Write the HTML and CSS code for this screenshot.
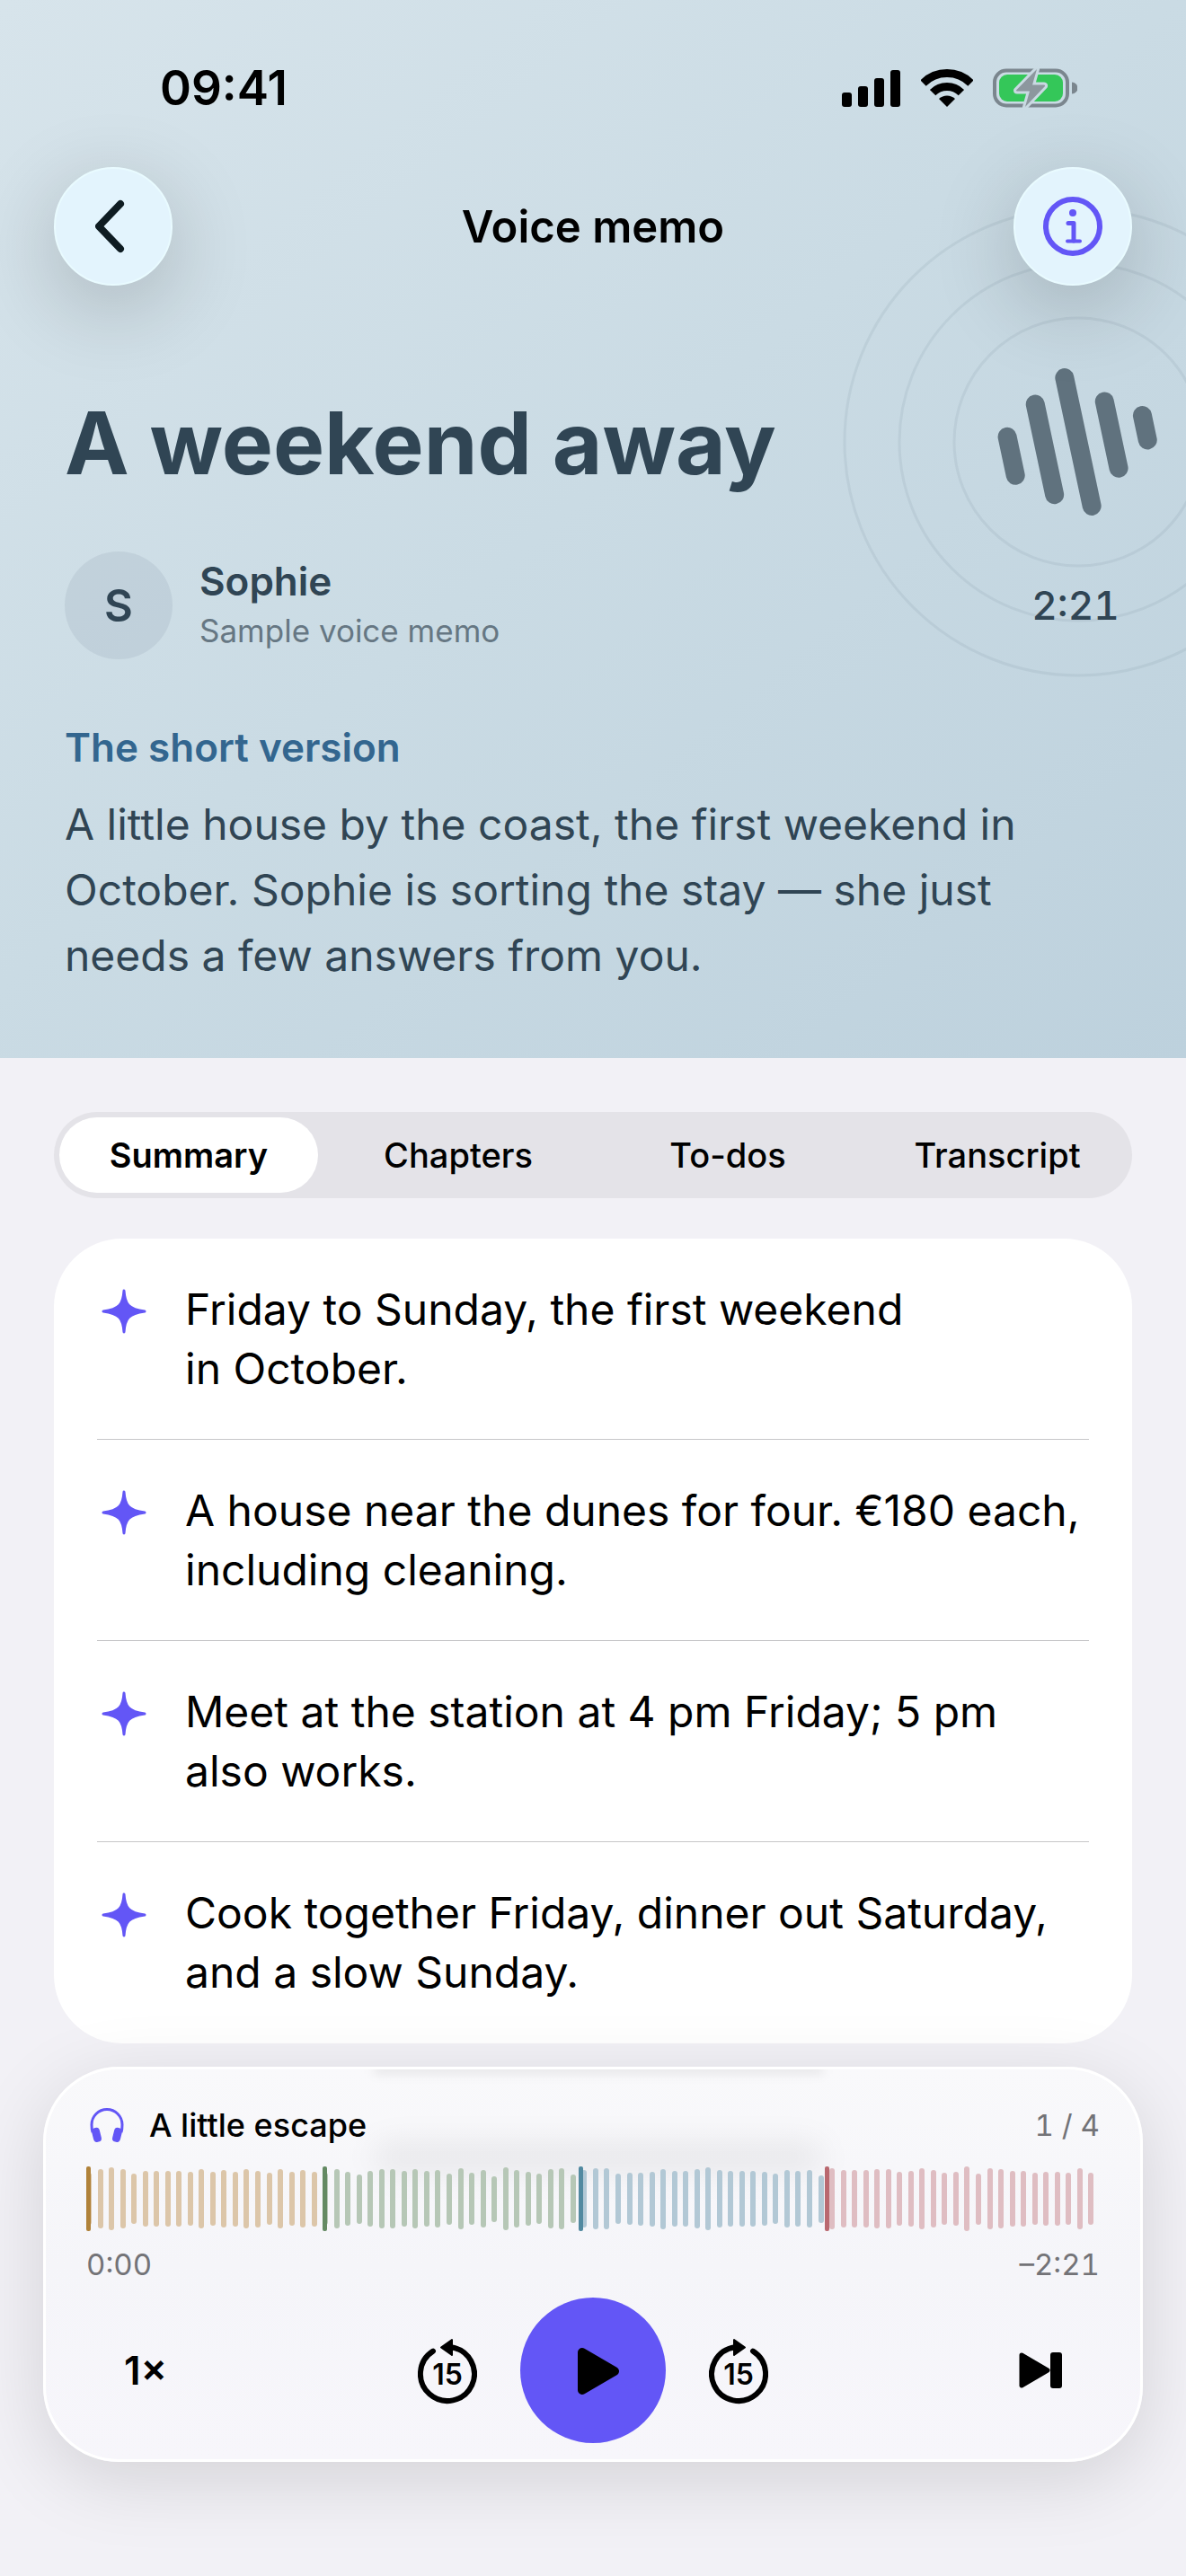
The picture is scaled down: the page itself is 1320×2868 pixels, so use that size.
FILE: index.html
```
<!DOCTYPE html>
<html lang="en">
<head>
    <meta charset="UTF-8">
    <meta name="viewport" content="width=device-width, initial-scale=1.0">
    <title>Voice memo</title>
    <link rel="stylesheet" href="styles.css">
</head>
<body>
    <!-- shared icon, used once per summary point -->
    <svg class="sprite" aria-hidden="true">
        <symbol id="spark" viewBox="0 0 50 50">
            <path d="M25 2C26 17 30 22.500 48 25C30 27.500 26 33 25 48C24 33 20 27.500 2 25C20 22.500 24 17 25 2Z" fill="currentColor" stroke="currentColor" stroke-width="3" stroke-linejoin="round"/>
        </symbol>
    </svg>

    <header class="hero">
        <div class="cover">
            <svg viewBox="0 0 524 524" aria-hidden="true">
                <g class="rings">
                    <circle cx="262" cy="262" r="138"/>
                    <circle cx="262" cy="262" r="199"/>
                    <circle cx="262" cy="262" r="260"/>
                </g>
                <g class="wave" transform="rotate(-12 262 262)">
                    <path d="M186 240v44M224 211v103M262 189v146M300 224v76M338 248v28"/>
                </g>
            </svg>
            <span class="duration">2:21</span>
        </div>

        <div class="status">
            <span class="clock">09:41</span>
            <div class="status-icons">
                <svg width="66" height="44" viewBox="0 0 66 44" aria-hidden="true">
                    <rect x="0" y="27" width="11" height="16" rx="3"/>
                    <rect x="18" y="20" width="11" height="23" rx="3"/>
                    <rect x="36" y="11" width="11" height="32" rx="3"/>
                    <rect x="54" y="2" width="11" height="41" rx="3"/>
                </svg>
                <svg width="58" height="44" viewBox="0 0 58 44" aria-hidden="true">
                    <path d="M2.500 16.500A37.500 37.500 0 0 1 55.500 16.500M13.100 27.100A22.500 22.500 0 0 1 44.900 27.100" fill="none" stroke="#000" stroke-width="9"/>
                    <path d="M29 43L20 34A13 13 0 0 1 38 34Z"/>
                </svg>
                <svg width="94" height="44" viewBox="0 0 94 44" aria-hidden="true">
                    <rect x="2" y="2.500" width="81" height="39" rx="13" fill="none" stroke="#7b868e" stroke-width="4"/>
                    <rect x="7" y="7" width="71" height="30" rx="9" fill="#34c759"/>
                    <path d="M88 15.500a6.500 6.500 0 0 1 0 13z" fill="#7b868e"/>
                    <path class="bolt" d="M49 1L26 24.500Q26 25.500 27 25.500H41L36 43L58 20Q58.500 18.500 57 18.500H44Z"/>
                </svg>
            </div>
        </div>

        <nav class="nav">
            <button class="round" aria-label="Back">
                <svg width="40" height="64" viewBox="0 0 40 64"><path d="M28 7L4 32L28 57" fill="none" stroke="#0e1c22" stroke-width="8" stroke-linecap="round" stroke-linejoin="round"/></svg>
            </button>
            <span class="nav-title">Voice memo</span>
            <button class="round" aria-label="Info">
                <svg width="66" height="66" viewBox="0 0 66 66" fill="none" stroke="#6356f6" stroke-linecap="round" stroke-linejoin="round">
                    <circle cx="33" cy="33" r="30" stroke-width="6"/>
                    <path d="M28 29.500H34V49" stroke-width="5"/>
                    <path d="M27 49.500H41" stroke-width="4"/>
                    <circle cx="33" cy="18" r="4" fill="#6356f6" stroke="none"/>
                </svg>
            </button>
        </nav>

        <div class="hero-body">
            <h1>A weekend away</h1>
            <div class="author">
                <span class="avatar">S</span>
                <div>
                    <div class="name">Sophie</div>
                    <div class="kind">Sample voice memo</div>
                </div>
            </div>
            <h2>The short version</h2>
            <p>A little house by the coast, the first weekend in October. Sophie is sorting the stay — she just needs a few answers from you.</p>
        </div>
    </header>

    <main>
        <div class="tabs" role="tablist">
            <button class="tab active" role="tab" aria-selected="true">Summary</button>
            <button class="tab" role="tab" aria-selected="false">Chapters</button>
            <button class="tab" role="tab" aria-selected="false">To-dos</button>
            <button class="tab" role="tab" aria-selected="false">Transcript</button>
        </div>

        <ul class="card">
            <li><svg class="spark"><use href="#spark"/></svg><span>Friday to Sunday, the first weekend in&nbsp;October.</span></li>
            <li><svg class="spark"><use href="#spark"/></svg><span>A house near the dunes for four. €180 each, including cleaning.</span></li>
            <li><svg class="spark"><use href="#spark"/></svg><span>Meet at the station at 4 pm Friday; 5 pm also&nbsp;works.</span></li>
            <li><svg class="spark"><use href="#spark"/></svg><span>Cook together Friday, dinner out Saturday, and a slow Sunday.</span></li>
        </ul>
    </main>

    <section class="player" aria-label="Player">
        <div class="now">
            <svg width="38" height="40" viewBox="0 0 38 40" aria-hidden="true">
                <path d="M3 28C2 25 2 22 2 19.500A17 17 0 0 1 36 19.500C36 22 36 25 35 28" fill="none" stroke="#6356f6" stroke-width="3"/>
                <rect x="3" y="23" width="9" height="16" rx="4" transform="rotate(-14 7 31)" fill="#6356f6"/>
                <rect x="26" y="23" width="9" height="16" rx="4" transform="rotate(14 31 31)" fill="#6356f6"/>
            </svg>
            <span class="chapter-name">A little escape</span>
            <span class="count">1 / 4</span>
        </div>

        <div class="waveform" id="waveform"></div>

        <div class="times">
            <span>0:00</span>
            <span>–2:21</span>
        </div>

        <div class="controls">
            <button class="side">1×</button>
            <div class="transport">
                <button aria-label="Back 15 seconds">
                    <svg width="66" height="80" viewBox="0 0 66 80">
                        <path d="M37 14.300A30 30 0 1 1 17 18.600" fill="none" stroke="#000" stroke-width="6" stroke-linecap="round"/>
                        <path d="M26 14.500L38 6V23Z" stroke="#000" stroke-width="2" stroke-linejoin="round"/>
                        <text x="33" y="56" text-anchor="middle">15</text>
                    </svg>
                </button>
                <button class="play" aria-label="Play">
                    <svg width="60" height="60" viewBox="0 0 60 60"><path d="M18 10L54 31L18 52Z" stroke="#000" stroke-width="10" stroke-linejoin="round"/></svg>
                </button>
                <button aria-label="Forward 15 seconds">
                    <svg width="66" height="80" viewBox="0 0 66 80">
                        <path d="M29 14.300A30 30 0 1 0 49 18.600" fill="none" stroke="#000" stroke-width="6" stroke-linecap="round"/>
                        <path d="M40 14.500L28 6V23Z" stroke="#000" stroke-width="2" stroke-linejoin="round"/>
                        <text x="33" y="56" text-anchor="middle">15</text>
                    </svg>
                </button>
            </div>
            <button class="side" aria-label="Next chapter">
                <svg width="50" height="44" viewBox="0 0 50 44">
                    <path d="M4 5L33 22L4 39Z" stroke="#000" stroke-width="5" stroke-linejoin="round"/>
                    <rect x="36" y="2" width="13" height="40" rx="3"/>
                </svg>
            </button>
        </div>
    </section>

    <script>
        // bar heights per chapter, start is the marker position in percent
        const chapters = [
            { name: 'one', start: 0, bars: [58, 66, 70, 66, 56, 62, 62, 62, 62, 60, 66, 60, 64, 61, 66, 63, 58, 66, 60, 64, 61] },
            { name: 'two', start: 23.3, bars: [58, 66, 60, 55, 62, 66, 66, 62, 66, 62, 64, 57, 68, 58, 64, 51, 70, 64, 60, 56, 66, 68, 54] },
            { name: 'three', start: 48.6, bars: [64, 68, 68, 56, 58, 59, 61, 67, 62, 62, 66, 70, 64, 62, 62, 62, 60, 56, 64, 62, 64, 53] },
            { name: 'four', start: 72.9, bars: [68, 64, 64, 64, 66, 66, 60, 62, 68, 64, 58, 60, 72, 57, 68, 66, 62, 62, 58, 60, 60, 58, 68, 58] }
        ];
        const waveform = document.getElementById('waveform');

        chapters.forEach(chapter => {
            chapter.bars.forEach(height => {
                const slot = document.createElement('span');
                slot.className = 'slot ' + chapter.name;
                slot.innerHTML = `<i style="height: ${height}px"></i>`;
                waveform.appendChild(slot);
            });

            const marker = document.createElement('b');
            marker.className = 'marker ' + chapter.name;
            marker.style.left = chapter.start + '%';
            waveform.appendChild(marker);
        });
    </script>
</body>
</html>
```
FILE: styles.css
```
* {
    box-sizing: border-box;
}

body {
    margin: 0;
    background-color: #f2f1f6;
    color: #000;
    font-family: Inter, "Liberation Sans", sans-serif;
}

button {
    padding: 0;
    border: none;
    background: none;
    color: inherit;
    font-family: inherit;
    cursor: pointer;
}

svg {
    display: block;
}

.sprite {
    position: absolute;
    width: 0;
    height: 0;
}

/* Hero */
.hero {
    position: relative;
    overflow: hidden;
    padding-bottom: 78px;
    background: linear-gradient(140deg, #d7e4eb 0%, #cadbe4 48%, #bdd1dd 100%);
    color: #304554;
}

.cover {
    position: absolute;
    top: 230px;
    right: -142px;
    width: 524px;
}

.rings {
    fill: none;
    stroke: rgba(48, 69, 84, 0.07);
    stroke-width: 3;
}

.wave {
    fill: none;
    stroke: #60727e;
    stroke-width: 21;
    stroke-linecap: round;
}

.duration {
    position: absolute;
    top: 416px;
    left: 0;
    right: 6px;
    text-align: center;
    font-size: 44px;
    line-height: 56px;
    font-weight: 500;
    font-variant-numeric: tabular-nums;
}

.status {
    display: flex;
    justify-content: space-between;
    align-items: center;
    height: 96px;
    margin: 50px 121px 40px 178px;
    color: #000;
}

.clock {
    font-size: 53px;
    font-weight: 600;
}

.status-icons {
    display: flex;
    gap: 22px;
}

.bolt {
    fill: #8c979e;
    stroke: #c9d9e2;
    stroke-width: 6;
    stroke-linejoin: round;
    paint-order: stroke;
}

.nav {
    position: relative;
    display: flex;
    justify-content: space-between;
    align-items: center;
    padding: 0 60px;
}

.nav-title {
    color: #000;
    font-size: 49px;
    font-weight: 600;
}

.round {
    display: grid;
    place-items: center;
    width: 132px;
    height: 132px;
    border: 2px solid #e9fbff;
    border-radius: 50%;
    background-color: #e3f4fd;
    box-shadow: 0 24px 96px rgba(0, 0, 0, 0.2);
}

.hero-body {
    position: relative;
    padding: 115px 72px 0;
}

h1 {
    margin: 0 0 61px;
    font-size: 96px;
    line-height: 120px;
    font-weight: 700;
}

.author {
    display: flex;
    align-items: center;
    gap: 30px;
    margin-bottom: 71px;
}

.avatar {
    display: grid;
    place-items: center;
    width: 120px;
    height: 120px;
    border-radius: 50%;
    background-color: rgba(48, 69, 84, 0.08);
    font-size: 49px;
    font-weight: 600;
}

.name {
    font-size: 44px;
    line-height: 56px;
    font-weight: 600;
}

.kind {
    color: #667783;
    font-size: 35px;
    line-height: 54px;
}

h2 {
    margin: 0 0 22px;
    color: #33668f;
    font-size: 44px;
    line-height: 54px;
    font-weight: 600;
}

p {
    max-width: 1120px;
    margin: 0;
    font-size: 48px;
    line-height: 73px;
}

/* Summary */
main {
    padding: 60px 60px 0;
}

.tabs {
    display: grid;
    grid-template-columns: repeat(4, 1fr);
    height: 96px;
    border-radius: 48px;
    background-color: #e4e3e8;
}

.tab {
    margin: 6px;
    border-radius: 42px;
    font-size: 38px;
    font-weight: 500;
}

.tab.active {
    background-color: #fff;
    font-weight: 600;
}

.card {
    margin: 45px 0 0;
    padding: 0 48px;
    border-radius: 76px;
    background-color: #fff;
    list-style: none;
}

.card li {
    display: flex;
    gap: 38px;
    padding: 46px 0 45px;
    border-bottom: 1px solid #c6c6c8;
    font-size: 48px;
    line-height: 66px;
}

.card li:last-child {
    border-bottom-color: transparent;
}

.spark {
    flex: none;
    width: 60px;
    height: 50px;
    margin-top: 10px;
    color: #6356f6;
}

/* Player */
.player {
    position: relative;
    display: flex;
    flex-direction: column;
    gap: 20px;
    margin: 26px 48px 126px;
    padding: 36px 45px 18px;
    border: 3px solid #fff;
    border-radius: 84px;
    background: linear-gradient(#f9f9fb, #f5f5f9 50%, #f7f6fb);
    box-shadow: 0 20px 84px rgba(0, 0, 0, 0.13);
    overflow: hidden;
}

/* text scrolled under the glass */
.player::before,
.player::after {
    content: "";
    position: absolute;
    left: 30%;
    right: 29%;
    background-color: rgba(0, 0, 0, 0.08);
}

.player::before {
    top: -6px;
    height: 11px;
    filter: blur(6px);
}

.player::after {
    top: 80px;
    height: 36px;
    border-radius: 18px;
    background-color: rgba(0, 0, 0, 0.06);
    filter: blur(16px);
}

.now {
    display: flex;
    align-items: center;
    height: 52px;
    padding-left: 4px;
}

.chapter-name {
    margin-left: 28px;
    font-size: 36px;
    font-weight: 500;
}

.count,
.times {
    color: #737377;
    font-size: 33px;
    font-variant-numeric: tabular-nums;
}

.count {
    margin-left: auto;
}

.waveform {
    position: relative;
    z-index: 1;
    display: flex;
    height: 72px;
}

.slot {
    flex: 1;
    display: flex;
    align-items: center;
}

.slot i {
    width: 6px;
    border-radius: 3px;
    background-color: var(--bar);
}

.marker {
    position: absolute;
    top: 0;
    width: 5px;
    height: 100%;
    border-radius: 2px;
    background-color: var(--mark);
}

.one {
    --bar: #dcc6a9;
    --mark: #b0823a;
}

.two {
    --bar: #b6c7b6;
    --mark: #648a63;
}

.three {
    --bar: #b2c8d5;
    --mark: #5189a0;
}

.four {
    --bar: #dfbdc2;
    --mark: #b9686f;
}

.times {
    display: flex;
    justify-content: space-between;
    line-height: 34px;
}

.controls {
    display: flex;
    justify-content: space-between;
    align-items: center;
}

.controls text {
    font-size: 32px;
    font-weight: 600;
}

.side {
    display: grid;
    place-items: center;
    width: 132px;
    height: 132px;
    font-size: 44px;
    font-weight: 600;
}

.transport {
    display: flex;
    align-items: center;
    gap: 48px;
}

.play {
    display: grid;
    place-items: center;
    width: 162px;
    height: 162px;
    border-radius: 50%;
    background-color: #6356f6;
}
```
